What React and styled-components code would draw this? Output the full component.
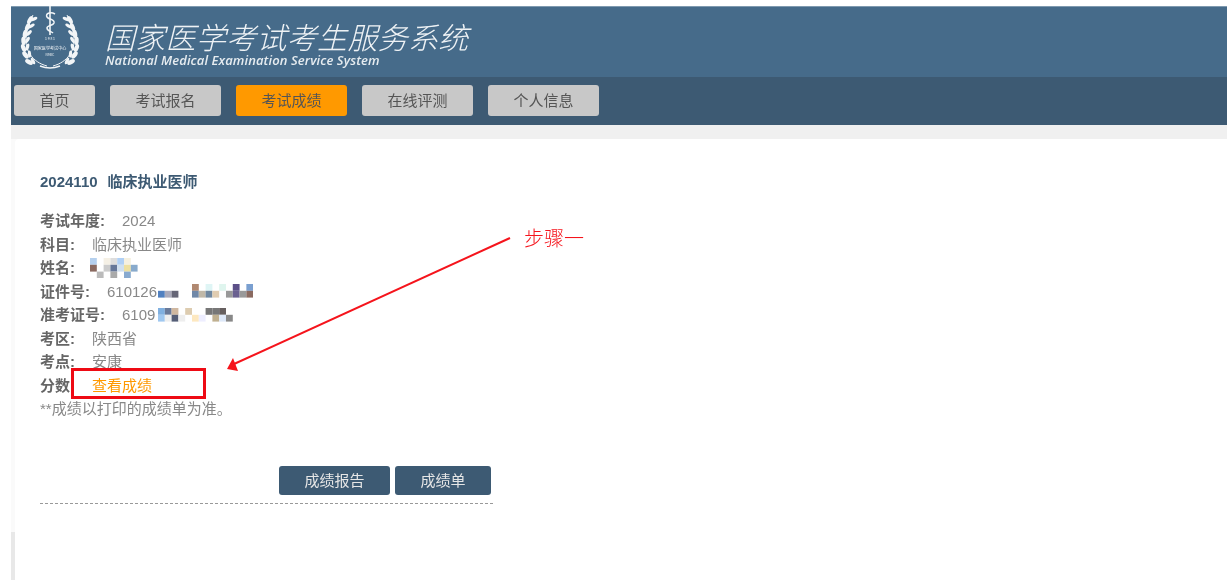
import React from "react";
import styled, { createGlobalStyle } from "styled-components";

const GlobalStyle = createGlobalStyle`
  html, body { margin: 0; padding: 0; background: #fff; }
  body { font-family: "Liberation Sans", "Noto Sans CJK SC", sans-serif; }
`;

const navItems = ["首页", "考试报名", "考试成绩", "在线评测", "个人信息"];

const nameCells = [
  [0, 0, "#b5d0ee"], [2, 0, "#f5f0e5"], [3, 0, "#dddddd"], [4, 0, "#b0d0f5"], [5, 0, "#f5f0e0"],
  [0, 1, "#8a6a60"], [2, 1, "#cccccc"], [3, 1, "#667799"], [4, 1, "#d0e0f0"], [5, 1, "#eee0a0"], [6, 1, "#88aacc"],
  [1, 2, "#bbbbbb"], [3, 2, "#aaaaaa"], [5, 2, "#88aad0"],
];
const idCells = [
  [5, 0, "#b08870"], [7, 0, "#dff5f5"], [9, 0, "#dff5ee"], [11, 0, "#5c5088"], [13, 0, "#7a9fd0"],
  [0, 1, "#5080c0"], [1, 1, "#aaaabb"], [2, 1, "#666677"], [5, 1, "#7088a8"], [6, 1, "#c0b8a8"], [7, 1, "#7088a0"],
  [8, 1, "#e0ccb0"], [10, 1, "#999999"], [11, 1, "#6a6090"], [12, 1, "#999999"], [13, 1, "#8a6a60"],
];
const ticketCells = [
  [0, 0, "#80b0e0"], [1, 0, "#6a7a99"], [2, 0, "#d0b8a0"], [4, 0, "#ddccb0"], [7, 0, "#777777"], [8, 0, "#777777"], [9, 0, "#665f5f"],
  [0, 1, "#a0c8f0"], [1, 1, "#eeeeee"], [2, 1, "#555e77"], [3, 1, "#eeeeee"], [5, 1, "#fde8c0"], [6, 1, "#eeeeff"],
  [8, 1, "#c0b090"], [9, 1, "#dde8f8"], [10, 1, "#888888"],
];

function Mosaic({ cells, cols, rows, shift }) {
  const size = 6.8;
  return (
    <MosaicSvg $shift={shift} width={cols * size} height={rows * size} viewBox={`0 0 ${cols} ${rows}`}>
      {cells.map(([x, y, c]) => (
        <rect key={`${x}-${y}`} x={x} y={y} width="1" height="1" fill={c} />
      ))}
    </MosaicSvg>
  );
}

function Leaves({ flip }) {
  const leaves = [
    [9, 56, -62], [5.5, 49, -40], [3.5, 42, -20], [3.5, 35, -5], [5, 28, 10], [7.5, 21, 22], [10, 14, 30],
  ];
  return (
    <g transform={flip ? "translate(60 0) scale(-1 1)" : undefined}>
      <path d="M27 60 C12 56 5 44 6 32 C7 22 10 15 13 9" fill="none" stroke="#f2f5f7" strokeWidth="1" />
      {leaves.map(([x, y, r]) => (
        <React.Fragment key={y}>
          <ellipse cx={x} cy={y} rx="2.2" ry="4.2" fill="#f2f5f7" transform={`rotate(${r} ${x} ${y})`} />
          <ellipse cx={x + 4} cy={y - 1} rx="1.6" ry="3.6" fill="#f2f5f7" transform={`rotate(${r + 35} ${x + 4} ${y - 1})`} />
        </React.Fragment>
      ))}
    </g>
  );
}

function Logo() {
  return (
    <LogoSvg width="60" height="64" viewBox="0 0 60 64">
      <Leaves />
      <Leaves flip />
      <path d="M30 0 V29" stroke="#f2f5f7" strokeWidth="1.6" />
      <path d="M35 8 C30 5 25 8 27 11 C29 14 35 13 34 17 C33 20 27 19 27 22 C27 25 31 25 33 27" fill="none" stroke="#f2f5f7" strokeWidth="1.5" />
      <SealText x="30" y="33.5" fontSize="3.4">1 9 8 1</SealText>
      <SealText x="30" y="44" fontSize="4.1">国家医学考试中心</SealText>
      <SealText x="30" y="50" fontSize="3.2">NMEC</SealText>
      <path d="M20 60 Q30 64 40 60" fill="none" stroke="#f2f5f7" strokeWidth="1.4" />
    </LogoSvg>
  );
}

export default function App() {
  return (
    <Page>
      <GlobalStyle />
      <Banner>
        <Logo />
        <Brand>
          <BrandTitle>国家医学考试考生服务系统</BrandTitle>
          <BrandSub>National Medical Examination Service System</BrandSub>
        </Brand>
      </Banner>
      <NavBar>
        {navItems.map((item, i) => (
          <NavButton key={item} $first={i === 0} $active={item === "考试成绩"}>
            {item}
          </NavButton>
        ))}
      </NavBar>
      <Shell>
        <Panel>
          <ExamTitle>
            <span>2024110</span>
            <span>临床执业医师</span>
          </ExamTitle>
          <InfoList>
            <Row><Label>考试年度:</Label><Value>2024</Value></Row>
            <Row><Label>科目:</Label><Value>临床执业医师</Value></Row>
            <Row>
              <Label>姓名:</Label>
              <Value><Mosaic cells={nameCells} cols={7} rows={3} shift={-2} /></Value>
            </Row>
            <Row>
              <Label>证件号:</Label>
              <Value>610126<Mosaic cells={idCells} cols={14} rows={2} shift={1} /></Value>
            </Row>
            <Row>
              <Label>准考证号:</Label>
              <Value>6109<Mosaic cells={ticketCells} cols={11} rows={2} shift={3} /></Value>
            </Row>
            <Row><Label>考区:</Label><Value>陕西省</Value></Row>
            <Row><Label>考点:</Label><Value>安康</Value></Row>
            <ScoreRow>
              <Label>分数:</Label>
              <ScoreLink>查看成绩</ScoreLink>
              <Highlight />
            </ScoreRow>
            <Note>**成绩以打印的成绩单为准。</Note>
          </InfoList>
          <Actions>
            <ActionButton $width={111}>成绩报告</ActionButton>
            <ActionButton $width={96}>成绩单</ActionButton>
          </Actions>
        </Panel>
        <Arrow width="300" height="150" viewBox="0 0 300 150">
          <path d="M289 8 L13 134" stroke="#f5141c" strokeWidth="2" fill="none" />
          <path d="M6 139 L12 128 L17 141 Z" fill="#f5141c" />
        </Arrow>
        <StepLabel>步骤一</StepLabel>
      </Shell>
    </Page>
  );
}

const Page = styled.div`
  width: 1216px;
  height: 574px;
  margin: 6px 0 0 11px;
  overflow: hidden;
  display: flex;
  flex-direction: column;
  filter: blur(0.35px);
`;
const Banner = styled.header`
  height: 71px;
  flex: none;
  display: flex;
  padding-left: 9px;
  gap: 25px;
  background: #466b8a;
  box-shadow: inset 0 1px 0 #7f9ab0;
`;
const LogoSvg = styled.svg`
  flex: none;
`;
const SealText = styled.text`
  fill: #f2f5f7;
  text-anchor: middle;
  font-family: "Noto Sans CJK SC", sans-serif;
`;
const Brand = styled.div`
  display: flex;
  flex-direction: column;
  padding-top: 13px;
`;
const BrandTitle = styled.div`
  font-family: "Noto Sans CJK SC", sans-serif;
  font-size: 30px;
  font-weight: 300;
  font-style: italic;
  line-height: 34px;
  letter-spacing: 0.3px;
  color: #eef2f5;
  white-space: nowrap;
`;
const BrandSub = styled.div`
  font-family: "Open Sans", "Liberation Sans", sans-serif;
  font-size: 13px;
  font-weight: 600;
  font-style: italic;
  line-height: 15px;
  letter-spacing: 0.1px;
  color: #e6ecf0;
  white-space: nowrap;
`;
const NavBar = styled.nav`
  height: 48px;
  flex: none;
  display: flex;
  align-items: flex-start;
  gap: 15px;
  padding: 8px 0 0 3px;
  box-sizing: border-box;
  background: #3d5a73;
`;
const NavButton = styled.div`
  width: ${(p) => (p.$first ? "81px" : "111px")};
  height: 31px;
  border-radius: 3px;
  background: ${(p) => (p.$active ? "#f90" : "#c8c8c8")};
  color: #555;
  font-size: 15px;
  line-height: 31px;
  text-align: center;
`;
const Shell = styled.main`
  position: relative;
  flex: 1;
  padding: 14px 0 0 4px;
  background: linear-gradient(#f0f0f0 0 14px, #fafafa 14px 407px, #e8e8e8 407px);
`;
const Panel = styled.section`
  height: 100%;
  box-sizing: border-box;
  padding: 33px 0 0 25px;
  background: #fff;
  border-top-left-radius: 4px;
`;
const ExamTitle = styled.h2`
  display: flex;
  gap: 10px;
  margin: 0;
  font-size: 15px;
  font-weight: 700;
  line-height: 20px;
  color: #3d5a73;
`;
const InfoList = styled.div`
  margin-top: 17px;
  font-size: 15px;
  line-height: 23.5px;
  color: #888;
`;
const Row = styled.div`
  display: flex;
  align-items: center;
  height: 23.5px;
  gap: 17px;
  white-space: nowrap;
`;
const ScoreRow = styled(Row)`
  position: relative;
`;
const Label = styled.span`
  font-weight: 700;
  color: #666;
`;
const Value = styled.span`
  display: inline-flex;
  align-items: center;
`;
const MosaicSvg = styled.svg`
  display: block;
  flex: none;
  margin-left: ${(p) => p.$shift}px;
`;
const ScoreLink = styled.span`
  position: relative;
  z-index: 1;
  color: #f90;
`;
const Highlight = styled.div`
  position: absolute;
  left: 31px;
  top: -6px;
  width: 135px;
  height: 31px;
  box-sizing: border-box;
  border: 3.5px solid #ee0a14;
  background: #fff;
`;
const Note = styled.div`
  position: relative;
  z-index: 1;
  height: 23.5px;
`;
const Actions = styled.div`
  width: 453px;
  box-sizing: border-box;
  margin-top: 45px;
  padding: 0 2px 8px 0;
  display: flex;
  justify-content: flex-end;
  gap: 5px;
  border-bottom: 1px dashed #999;
`;
const ActionButton = styled.div`
  width: ${(p) => p.$width}px;
  height: 29px;
  border-radius: 3px;
  background: #3d5a73;
  color: #e6e6e6;
  font-size: 15px;
  line-height: 29px;
  text-align: center;
`;
const Arrow = styled.svg`
  position: absolute;
  left: 210px;
  top: 105px;
`;
const StepLabel = styled.div`
  position: absolute;
  left: 513px;
  top: 102px;
  font-family: "Liberation Serif", "Noto Sans CJK SC", serif;
  font-size: 20px;
  font-weight: 300;
  line-height: 24px;
  color: #f5141c;
`;
